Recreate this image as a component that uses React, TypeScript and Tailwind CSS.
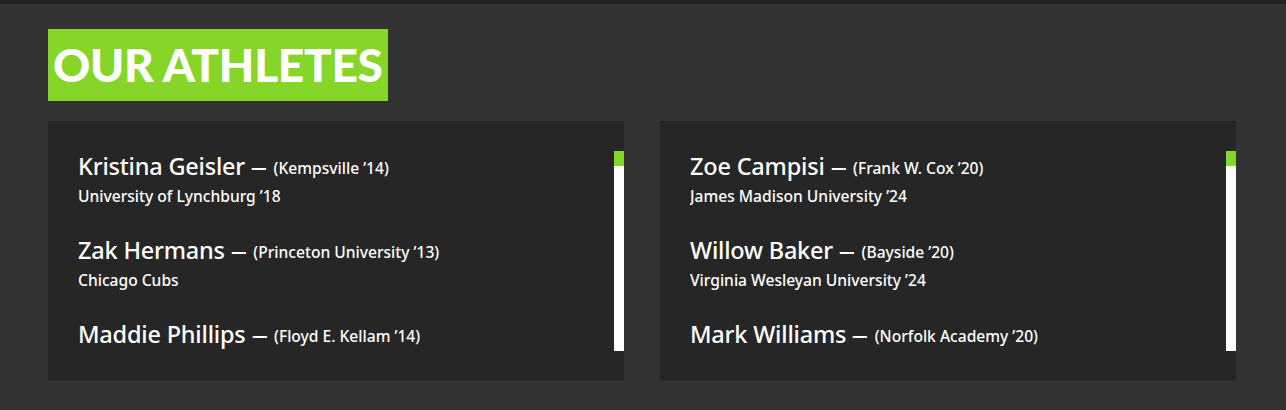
import React from "react";

type Athlete = { name: string; school: string; sub?: string };

const left: Athlete[] = [
  { name: "Kristina Geisler", school: "(Kempsville ’14)", sub: "University of Lynchburg ’18" },
  { name: "Zak Hermans", school: "(Princeton University ’13)", sub: "Chicago Cubs" },
  { name: "Maddie Phillips", school: "(Floyd E. Kellam ’14)" },
];

const right: Athlete[] = [
  { name: "Zoe Campisi", school: "(Frank W. Cox ’20)", sub: "James Madison University ’24" },
  { name: "Willow Baker", school: "(Bayside ’20)", sub: "Virginia Wesleyan University ’24" },
  { name: "Mark Williams", school: "(Norfolk Academy ’20)" },
];

function Card({ items }: { items: Athlete[] }) {
  return (
    <div className="flex-1 bg-[#262626] py-[30px] pl-[30px]">
      <div className="flex h-[200px] overflow-hidden">
        <div className="flex-1 flex flex-col gap-[24px]">
          {items.map((a) => (
            <div key={a.name} className="flex flex-col">
              <div className="h-[30px] flex items-center text-white whitespace-nowrap font-medium">
                <span className="text-[23.5px] leading-[30px] tracking-[-0.2px]">{a.name}</span>
                <span className="inline-block text-[23px] leading-[30px] ml-[8px] mr-[9px] scale-x-[1.45]">–</span>
                <span className="text-[15.6px] leading-[30px] pt-[3px]">{a.school}</span>
              </div>
              {a.sub && (
                <div className="h-[30px] flex items-center pt-[2px] text-white text-[15.6px] font-medium">{a.sub}</div>
              )}
            </div>
          ))}
        </div>
        <div className="w-[10px] flex flex-col bg-white">
          <div className="h-[15px] bg-[#86d62a]" />
        </div>
      </div>
    </div>
  );
}

export default function App() {
  return (
    <div className="w-[1286px] h-[410px] bg-[#333333] flex flex-col" style={{ fontFamily: "'Noto Sans', Lato, sans-serif" }}>
      <div className="h-[4px] bg-[#222222]" />
      <div className="px-[48px] pt-[25px]">
        <div className="inline-flex items-center h-[72px] w-[340px] bg-[#86d62a] px-[5px]" style={{ fontFamily: "Lato, sans-serif" }}>
          <h1 className="text-white text-[46px] font-black leading-none tracking-[-0.3px]">OUR ATHLETES</h1>
        </div>
        <div className="flex gap-[36px] mt-[20px] w-[1188px]">
          <Card items={left} />
          <Card items={right} />
        </div>
      </div>
    </div>
  );
}
